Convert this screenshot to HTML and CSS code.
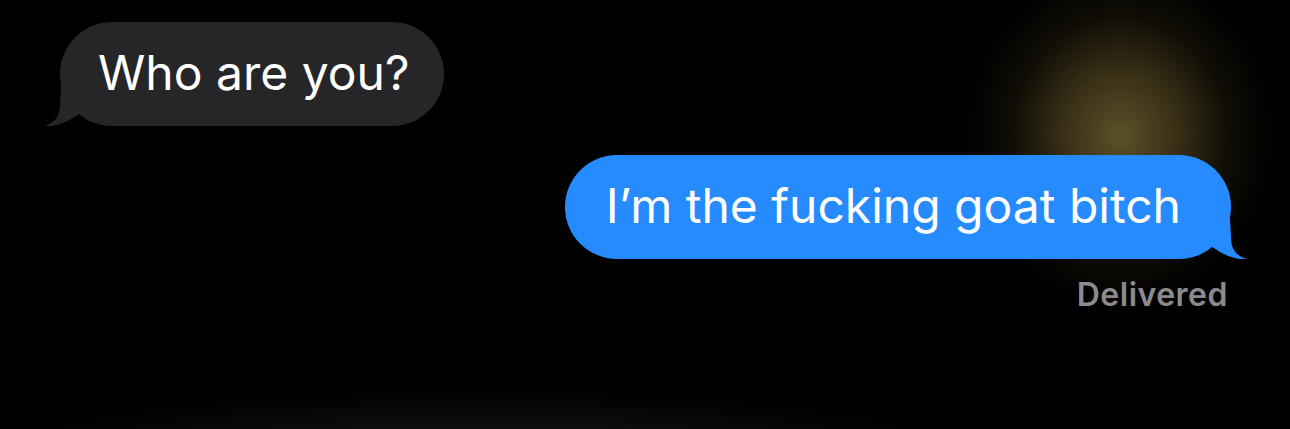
FILE: index.html
```html
<html>
  <head>
    <link rel="stylesheet" href="styles.css">
  </head>
  <body>
    <div class='thread'>
      <div class='row rowIn'>
        <div class='bubble bubbleIn'>
          Who are you?
          <svg class='tail tailIn' width='60' height='40' viewBox='0 0 60 40'>
            <path d='M21 0 L20 18 C20 30 15 37 4 40 C16 41 28 36 40 27 L46 0 Z' fill='#262629'/>
          </svg>
        </div>
      </div>
      <div class='row rowOut'>
        <div class='bubble bubbleOut'>
          I’m the fucking goat bitch
          <svg class='tail tailOut' width='60' height='40' viewBox='0 0 60 40'>
            <path d='M21 0 L20 18 C20 30 15 37 4 40 C16 41 28 36 40 27 L46 0 Z' fill='#268bff'/>
          </svg>
        </div>
      </div>
      <div class='row rowOut'>
        <span class='status'>Delivered</span>
      </div>
    </div>
  </body>
</html>
```

FILE: styles.css
```css
body{
  margin: 0;
  height: 429px;
  overflow: hidden;
  font-family: Inter, "Noto Sans", sans-serif;
  background-color: #000;
  background-image:
    radial-gradient(ellipse 155px 170px at 1120px 135px, rgba(98,84,42,0.95) 0, rgba(80,68,32,0.72) 35%, rgba(42,34,15,0.38) 70%, rgba(0,0,0,0) 100%),
    radial-gradient(ellipse 480px 55px at 480px 445px, #151517 0, rgba(0,0,0,0) 100%);
  background-repeat: no-repeat;
}
.thread{
  display: flex;
  flex-direction: column;
  padding: 22px 59px 0 60px;
}
.row{
  display: flex;
}
.rowOut{
  justify-content: flex-end;
}
.bubble{
  position: relative;
  height: 104px;
  box-sizing: border-box;
  display: flex;
  align-items: center;
  border-radius: 52px;
  color: #fff;
  font-size: 48px;
  padding: 0 35px 4px 38px;
}
.bubbleIn{
  background-color: #262629;
}
.bubbleOut{
  margin-top: 29px;
  background-color: #268bff;
  padding: 0 50px 4px 41px;
}
.tail{
  position: absolute;
  bottom: 0;
}
.tailIn{
  left: -20px;
}
.tailOut{
  right: -20px;
  transform: scaleX(-1);
}
.status{
  margin-top: 16px;
  margin-right: 3px;
  color: #8b8b8f;
  font-size: 32px;
  letter-spacing: 0.5px;
  font-weight: 600;
}
```
